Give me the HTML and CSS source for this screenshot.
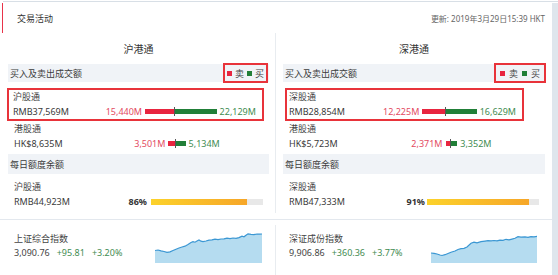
FILE: index.html
```html
<!DOCTYPE html>
<html lang="zh">
<head>
<meta charset="utf-8">
<link rel="stylesheet" href="styles.css">
</head>
<body>
<div class="topline"></div>
<div class="panel">
  <div class="header">
    <span class="title">交易活动</span>
    <span class="update">更新: 2019年3月29日15:39 HKT</span>
  </div>
  <div class="cols">
    <div class="col col-left">
      <div class="col-title">沪港通</div>
      <div class="gray-row">
        <span>买入及卖出成交额</span>
        <span class="legend"><i class="sq sq-sell"></i><span>卖</span><i class="sq sq-buy"></i><span>买</span></span>
      </div>
      <div class="item box box-sh">
        <div class="name">沪股通</div>
        <div class="line">
          <div class="trade-left"><span class="value">RMB37,569M</span><span class="sell-val">15,440M</span><span class="bar-sell" style="width:29px"></span></div>
          <span class="marker"></span><span class="bar-buy" style="width:41.6px"></span><span class="buy-val">22,129M</span>
        </div>
      </div>
      <div class="item plain">
        <div class="name">港股通</div>
        <div class="line">
          <div class="trade-left"><span class="value">HK$8,635M</span><span class="sell-val">3,501M</span><span class="bar-sell" style="width:6.6px"></span></div>
          <span class="marker"></span><span class="bar-buy" style="width:9.6px"></span><span class="buy-val">5,134M</span>
        </div>
      </div>
      <div class="gray-row gray-quota"><span>每日额度余额</span></div>
      <div class="item plain quota-item">
        <div class="name">沪股通</div>
        <div class="line">
          <span class="value">RMB44,923M</span><span class="pct">86%</span>
          <span class="qbar"><span class="qfill" style="width:86%"></span></span>
        </div>
      </div>
    </div>
    <div class="col col-right">
      <div class="col-title">深港通</div>
      <div class="gray-row">
        <span>买入及卖出成交额</span>
        <span class="legend legend-wide"><i class="sq sq-sell"></i><span>卖</span><i class="sq sq-buy"></i><span>买</span></span>
      </div>
      <div class="item box box-sz">
        <div class="name">深股通</div>
        <div class="line">
          <div class="trade-left"><span class="value">RMB28,854M</span><span class="sell-val">12,225M</span><span class="bar-sell" style="width:23px"></span></div>
          <span class="marker"></span><span class="bar-buy" style="width:31.3px"></span><span class="buy-val">16,629M</span>
        </div>
      </div>
      <div class="item plain">
        <div class="name">港股通</div>
        <div class="line">
          <div class="trade-left"><span class="value">HK$5,723M</span><span class="sell-val">2,371M</span><span class="bar-sell" style="width:4.5px"></span></div>
          <span class="marker"></span><span class="bar-buy" style="width:6.3px"></span><span class="buy-val">3,352M</span>
        </div>
      </div>
      <div class="gray-row gray-quota"><span>每日额度余额</span></div>
      <div class="item plain quota-item">
        <div class="name">深股通</div>
        <div class="line">
          <span class="value">RMB47,333M</span><span class="pct pct-tight">91%</span>
          <span class="qbar"><span class="qfill" style="width:91%"></span></span>
        </div>
      </div>
    </div>
  </div>
  <div class="sep"></div>
  <div class="bottom">
    <div class="idx idx-left">
      <div class="idx-text">
        <div class="idx-name">上证综合指数</div>
        <div class="idx-nums"><span>3,090.76</span><span class="up">+95.81</span><span class="up">+3.20%</span></div>
      </div>
      <svg class="chart" width="107" height="30" viewBox="0 0 107 30">
        <path class="area" d="M0,17.5 L3,17 L6,17.8 L9,18.5 L12,19.3 L15,18.8 L18,17.5 L21,16.2 L24,15 L27,14 L30,13.2 L33,11.5 L36,9.5 L38,8.6 L40,9.2 L42,8 L44,7 L46,8.2 L48,8.6 L51,8 L54,7.2 L57,6.8 L60,6.2 L63,6.6 L66,6 L69,5.8 L72,5.2 L75,5.6 L78,5 L81,5.4 L84,4.6 L87,3.2 L89,3.8 L91,2.2 L93,0.8 L96,1.4 L99,1.6 L102,1 L105,1.2 L107,1 L107,30 L0,30 Z"/>
        <path class="stroke" d="M0,17.5 L3,17 L6,17.8 L9,18.5 L12,19.3 L15,18.8 L18,17.5 L21,16.2 L24,15 L27,14 L30,13.2 L33,11.5 L36,9.5 L38,8.6 L40,9.2 L42,8 L44,7 L46,8.2 L48,8.6 L51,8 L54,7.2 L57,6.8 L60,6.2 L63,6.6 L66,6 L69,5.8 L72,5.2 L75,5.6 L78,5 L81,5.4 L84,4.6 L87,3.2 L89,3.8 L91,2.2 L93,0.8 L96,1.4 L99,1.6 L102,1 L105,1.2 L107,1"/>
      </svg>
    </div>
    <div class="idx idx-right">
      <div class="idx-text">
        <div class="idx-name">深证成份指数</div>
        <div class="idx-nums"><span>9,906.86</span><span class="up">+360.36</span><span class="up">+3.77%</span></div>
      </div>
      <svg class="chart" width="106" height="30" viewBox="0 0 106 30">
        <path class="area" d="M0,20 L3,20.3 L6,21 L9,22 L11,22.5 L14,21.7 L17,20.5 L20,19.3 L24,18 L27,16.5 L30,15.7 L33,15.3 L36,14 L40,10.3 L43,9.1 L46,9.9 L50,8.7 L54,8.1 L57,7.7 L60,7.9 L63,7.5 L66,7.8 L69,7.1 L72,7.3 L75,6.3 L78,6.9 L81,6.1 L84,5.3 L87,3.7 L90,4.1 L94,3.9 L97,4.3 L100,3.6 L103,3.8 L106,3.3 L106,30 L0,30 Z"/>
        <path class="stroke" d="M0,20 L3,20.3 L6,21 L9,22 L11,22.5 L14,21.7 L17,20.5 L20,19.3 L24,18 L27,16.5 L30,15.7 L33,15.3 L36,14 L40,10.3 L43,9.1 L46,9.9 L50,8.7 L54,8.1 L57,7.7 L60,7.9 L63,7.5 L66,7.8 L69,7.1 L72,7.3 L75,6.3 L78,6.9 L81,6.1 L84,5.3 L87,3.7 L90,4.1 L94,3.9 L97,4.3 L100,3.6 L103,3.8 L106,3.3"/>
      </svg>
    </div>
  </div>
</div>
</body>
</html>
```

FILE: styles.css
```css
* { box-sizing: border-box; margin: 0; padding: 0; }

body {
  margin: 0;
  width: 558px;
  height: 275px;
  overflow: hidden;
  background: #fff;
  font-family: "Noto Sans", "Noto Sans CJK SC", sans-serif;
  font-size: 9px;
  color: #3c3c3c;
}

.topline {
  height: 1px;
  margin: 1px 0 0 3px;
  background: #d8dfe6;
}

.panel {
  height: 273px;
  border-right: 6px solid #dfe6ed;
}

.header {
  display: flex;
  align-items: center;
  justify-content: space-between;
  height: 30px;
  margin: 1px 0 0 2px;
  padding: 0 7px 0 14px;
  border-left: 1px solid #e8334a;
}

.title { font-size: 9px; color: #333; }
.update { font-size: 8px; color: #666; }

.cols {
  display: flex;
  height: 180px;
}

.col-left {
  width: 276px;
  padding: 0 6px 0 8px;
  border-right: 1px solid #e8ecf0;
}

.col-right {
  flex: 1;
  padding: 0 7px;
}

.col-title {
  height: 31px;
  display: flex;
  align-items: center;
  justify-content: center;
  font-size: 10px;
  color: #333;
}

.gray-row {
  height: 18px;
  display: flex;
  align-items: center;
  justify-content: space-between;
  padding-left: 2px;
  background: #f0f3f7;
}

.gray-quota {
  height: 20px;
  margin-top: 3px;
}

.legend {
  display: flex;
  align-items: center;
  gap: 3px;
  height: 20px;
  margin: -1px 1px -1px 0;
  padding: 0 2px;
  border: 2px solid #e8333a;
  color: #444;
}

.legend-wide {
  gap: 4px;
  padding: 0 4px;
  margin-right: -1px;
}

.sq {
  display: block;
  width: 5px;
  height: 5px;
}

.sq-sell { background: #e8253f; }
.sq-buy { background: #217f38; }

.item { padding-right: 6px; }
.plain { padding-left: 6px; }

.box {
  margin-top: 6px;
  border: 2px solid #e8333a;
}

.box-sh {
  width: 257px;
  padding-left: 4px;
  margin-left: -1px;
}

.box-sz {
  width: 239px;
  margin-left: 2px;
  padding-left: 2px;
}

.box + .plain { margin-top: 1px; }

.quota-item { margin-top: 6px; }

.name {
  height: 14px;
  line-height: 14px;
  color: #444;
}

.line {
  height: 15px;
  display: flex;
  align-items: center;
}

.value {
  flex: 1;
  font-size: 9px;
  color: #3a3a3a;
}

.trade-left {
  width: 161px;
  display: flex;
  align-items: center;
}

.sell-val {
  margin-right: 3px;
  color: #e34a5f;
}

.bar-sell {
  display: block;
  height: 5px;
  background: #e8253f;
}

.marker {
  display: block;
  width: 1px;
  height: 9px;
  background: #555;
}

.bar-buy {
  display: block;
  height: 5px;
  background: #217f38;
}

.buy-val {
  margin-left: 3px;
  color: #3f8c52;
}

.pct {
  margin-right: 4px;
  font-weight: 700;
  color: #333;
}

.pct-tight { margin-right: 2px; }

.qbar {
  display: flex;
  width: 112px;
  height: 6px;
  background: #e8e8e8;
}

.qfill {
  display: block;
  height: 100%;
  background: linear-gradient(90deg, #fcd22b, #f6a628);
}

.sep {
  height: 1px;
  margin-top: 6px;
  background: #e3e8ee;
}

.bottom {
  display: flex;
  height: 50px;
  margin-top: 5px;
}

.idx {
  display: flex;
  align-items: flex-start;
  padding-top: 7px;
}

.idx-left {
  width: 276px;
  padding-left: 14px;
  padding-right: 13px;
  border-right: 1px solid #e8ecf0;
}

.idx-right {
  flex: 1;
  padding-left: 13px;
  padding-right: 15px;
}

.idx-text { flex: 1; }

.idx-name {
  height: 14px;
  line-height: 14px;
  color: #444;
}

.idx-nums {
  display: flex;
  gap: 7px;
  height: 13px;
  line-height: 13px;
  font-size: 9px;
  color: #444;
}

.up { color: #3f8c52; }

.chart {
  display: block;
  margin-top: 1px;
}

.chart .area { fill: #b5dcf0; }

.chart .stroke {
  fill: none;
  stroke: #3b97d3;
  stroke-width: 1.2;
}
```
